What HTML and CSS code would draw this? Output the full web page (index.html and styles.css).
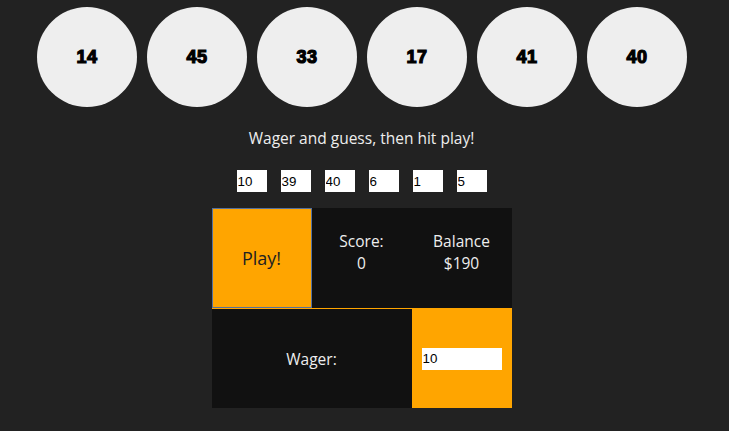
FILE: index.html
```
<!DOCTYPE html>
<html>
<head>
<meta charset="utf-8">
<link rel="stylesheet" href="styles.css">
</head>
<body>
<div class="page">
<div class="balls">
  <div class="ball">14</div>
  <div class="ball">45</div>
  <div class="ball">33</div>
  <div class="ball">17</div>
  <div class="ball">41</div>
  <div class="ball">40</div>
</div>
<p class="prompt">Wager and guess, then hit play!</p>
<div class="guesses">
  <input class="guess" type="text" value="10">
  <input class="guess" type="text" value="39">
  <input class="guess" type="text" value="40">
  <input class="guess" type="text" value="6">
  <input class="guess" type="text" value="1">
  <input class="guess" type="text" value="5">
</div>
<div class="board">
  <div class="row">
    <button class="play">Play!</button>
    <div class="stat"><span>Score:</span><span>0</span></div>
    <div class="stat"><span>Balance</span><span>$190</span></div>
  </div>
  <div class="row row-wager">
    <div class="wager-label">Wager:</div>
    <div class="wager-cell"><input class="wager-input" type="text" value="10"></div>
  </div>
</div>
</div>
</body>
</html>
```
FILE: styles.css
```
html, body {
  margin: 0;
  padding: 0;
  background: #222222;
  font-family: "Open Sans", "Lato", sans-serif;
  color: #eeeeee;
}
.page {
  padding-right: 6px;
}
.balls {
  display: flex;
  justify-content: center;
  gap: 10px;
  padding: 7px 0 0 1px;
}
.ball {
  width: 100px;
  height: 100px;
  border-radius: 50%;
  background: #eeeeee;
  color: #000;
  display: flex;
  align-items: center;
  justify-content: center;
  font-family: "Liberation Sans", Arial, sans-serif;
  font-weight: 900;
  font-size: 18px;
  letter-spacing: 0.5px;
  -webkit-text-stroke: 1.2px #000;
}
.prompt {
  margin: 20px 0 0;
  text-align: center;
  font-size: 15.5px;
  line-height: 22px;
}
.guesses {
  display: flex;
  justify-content: center;
  gap: 14px;
  margin-top: 21px;
}
.guess, .wager-input {
  width: 30px;
  height: 22px;
  box-sizing: border-box;
  border: none;
  padding: 0 1px;
  margin: 0;
  background: #fff;
  color: #000;
  font-family: "Liberation Sans", Arial, sans-serif;
  font-size: 13.33px;
}
.board {
  width: 300px;
  margin: 16px auto 0;
}
.row {
  display: flex;
  height: 100px;
  background: #111111;
}
.play {
  width: 100px;
  height: 100px;
  box-sizing: border-box;
  margin: 0;
  border: 1px solid #56709c;
  background: #ffa500;
  color: #222;
  font-family: "Open Sans", "Lato", sans-serif;
  font-size: 18px;
  cursor: pointer;
}
.stat {
  width: 100px;
  box-sizing: border-box;
  padding-top: 22px;
  display: flex;
  flex-direction: column;
  align-items: center;
  font-size: 15.5px;
  line-height: 22px;
}
.row-wager {
  background: #ffa500;
  padding-top: 1px;
  height: 99px;
}
.wager-label {
  width: 200px;
  background: #111111;
  display: flex;
  align-items: center;
  justify-content: center;
  font-size: 15.5px;
}
.wager-cell {
  width: 100px;
  display: flex;
  align-items: center;
  justify-content: center;
}
.wager-input {
  width: 80px;
}
```
